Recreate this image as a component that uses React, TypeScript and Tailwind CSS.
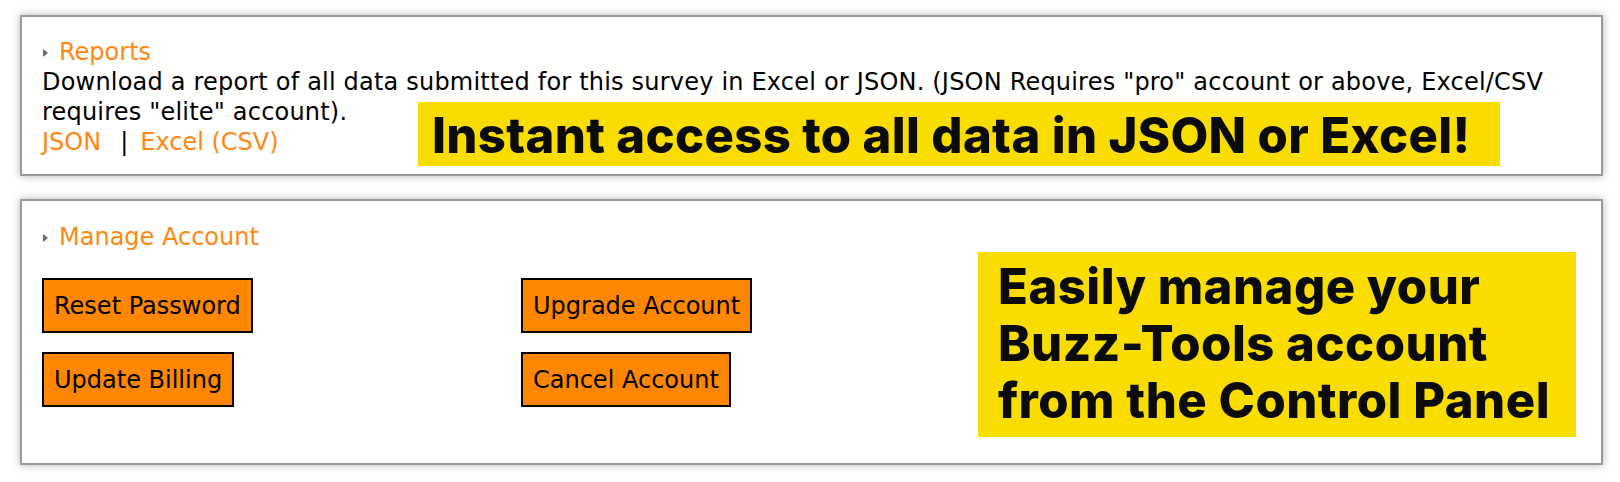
import React from "react";

const body = { fontFamily: '"DejaVu Sans", Verdana, sans-serif' };
const callout = { fontFamily: 'Inter, "Open Sans", sans-serif' };

function Caret() {
  return (
    <svg width="7" height="10" viewBox="0 0 7 10" className="mr-[10px] mt-[2px] shrink-0">
      <path d="M1 1 L6 5 L1 9 Z" fill="#6a6a6a" />
    </svg>
  );
}

function SectionTitle({ label }: { label: string }) {
  return (
    <div className="flex h-[30px] items-center text-[#ff8812]">
      <Caret />
      <span>{label}</span>
    </div>
  );
}

function OrangeButton({ label }: { label: string }) {
  return (
    <button className="h-[55px] border-2 border-black bg-[#ff8600] px-[10px] text-[24px] leading-none text-black">
      {label}
    </button>
  );
}

export default function App() {
  return (
    <div className="min-h-[482px] bg-white pt-[15px] text-[24px] leading-[30px]" style={body}>
      {/* Reports */}
      <div className="relative ml-[20px] h-[161px] w-[1583px] border-2 border-[#9a9a9a] bg-white px-[20px] pt-[20px] shadow-[0_0_8px_rgba(0,0,0,0.3)]">
        <SectionTitle label="Reports" />
        <p className="tracking-[0.2px] text-black">
          Download a report of all data submitted for this survey in Excel or JSON. (JSON Requires "pro" account or above, Excel/CSV
          <br />
          requires "elite" account).
        </p>
        <div className="flex">
          <a className="text-[#ff8812]">JSON</a>
          <span className="ml-[19px] text-black">|</span>
          <a className="ml-[12px] text-[#ff8812]">Excel (CSV)</a>
        </div>

        <div
          className="absolute left-[396px] top-[85px] flex h-[64px] w-[1082px] items-center bg-[#f9dd00] pl-[14px] pt-[3px] text-[49px] font-extrabold leading-none tracking-[0.35px] text-[#0b0b0b]"
          style={callout}
        >
          Instant access to all data in JSON or Excel!
        </div>
      </div>

      {/* Manage Account */}
      <div className="relative ml-[20px] mt-[23px] h-[266px] w-[1583px] border-2 border-[#9a9a9a] bg-white px-[20px] pt-[21px] shadow-[0_0_8px_rgba(0,0,0,0.3)]">
        <SectionTitle label="Manage Account" />
        <div className="mt-[26px] grid grid-cols-[479px_auto] gap-y-[19px]">
          <div>
            <OrangeButton label="Reset Password" />
          </div>
          <div>
            <OrangeButton label="Upgrade Account" />
          </div>
          <div>
            <OrangeButton label="Update Billing" />
          </div>
          <div>
            <OrangeButton label="Cancel Account" />
          </div>
        </div>

        <div
          className="absolute left-[956px] top-[51px] h-[185px] w-[598px] bg-[#f9dd00] pl-[20px] pt-[6px] text-[49px] font-extrabold leading-[57px] tracking-[0.5px] text-[#0b0b0b]"
          style={callout}
        >
          Easily manage your
          <br />
          Buzz-Tools account
          <br />
          from the Control Panel
        </div>
      </div>
    </div>
  );
}
